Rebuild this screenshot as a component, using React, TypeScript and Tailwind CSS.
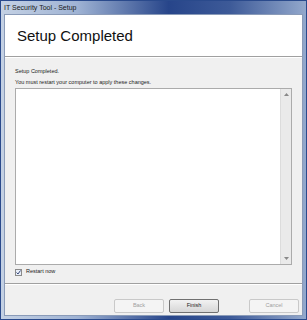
import React from "react";

function Btn({ label, disabled }: { label: string; disabled?: boolean }) {
  return (
    <div
      className={
        "w-[50px] h-[14px] flex items-center justify-center rounded-[2px] border text-[5.5px] leading-none " +
        (disabled
          ? "border-[#c9c9c9] bg-[#f4f4f4] text-[#a0a0a0]"
          : "border-[#707070] bg-[linear-gradient(#f2f2f2,#e4e4e4_50%,#d6d6d6)] text-[#222]")
      }
    >
      {label}
    </div>
  );
}

export default function App() {
  return (
    <div
      className="w-[307px] h-[320px] flex flex-col bg-[linear-gradient(90deg,#c4d1e4_0%,#9fb3d4_25%,#27458a_55%,#3d5a98_75%,#93a8cc_100%)] border border-[#2a4a8c]"
      style={{ fontFamily: '"Liberation Sans", Arial, sans-serif' }}
    >
      <div className="h-[13px] flex items-center pl-[3px] text-[7px] text-[#1a1a1a] leading-none">
        IT Security Tool - Setup
      </div>
      <div className="flex-1 flex flex-col mx-[3px] mb-[3px] bg-[#f0f0f0] border border-[#8a9bb8]">
        <div className="h-[42px] bg-white border-b border-[#a0a0a0] flex items-center pl-[12px]">
          <span className="text-[15px] text-[#111] leading-none">Setup Completed</span>
        </div>
        <div className="border-t border-white" />
        <div className="flex flex-col px-[10px] pt-[11px]">
          <div className="text-[5.5px] text-[#222] leading-none">Setup Completed.</div>
          <div className="text-[5.5px] text-[#222] leading-none mt-[5px]">
            You must restart your computer to apply these changes.
          </div>
          <div className="mt-[3px] h-[177px] bg-white border border-[#ababab] flex justify-end">
            <div className="w-[11px] bg-[#eaeaea] border-l border-[#dcdcdc] flex flex-col items-center justify-between py-[4px]">
              <svg width="5" height="3" viewBox="0 0 5 3">
                <path d="M0 3 L2.5 0 L5 3 Z" fill="#888" />
              </svg>
              <svg width="5" height="3" viewBox="0 0 5 3">
                <path d="M0 0 L2.5 3 L5 0 Z" fill="#888" />
              </svg>
            </div>
          </div>
          <div className="flex items-center mt-[3px] h-[8px]">
            <div className="w-[7px] h-[7px] border border-[#8a8a8a] bg-[#e8eef8] flex items-center justify-center">
              <svg width="5" height="5" viewBox="0 0 5 5">
                <path d="M0.5 2.5 L2 4 L4.5 0.5" stroke="#3a4a7a" strokeWidth="1" fill="none" />
              </svg>
            </div>
            <span className="ml-[4px] text-[5.5px] text-[#222] leading-none">Restart now</span>
          </div>
        </div>
        <div className="mt-[7px] border-t border-[#a0a0a0]" />
        <div className="border-t border-white" />
        <div className="flex-1 flex items-end justify-end pb-[2px] pr-[3px]">
          <Btn label="Back" disabled />
          <div className="w-[5px]" />
          <Btn label="Finish" />
          <div className="w-[30px]" />
          <Btn label="Cancel" disabled />
        </div>
      </div>
    </div>
  );
}
